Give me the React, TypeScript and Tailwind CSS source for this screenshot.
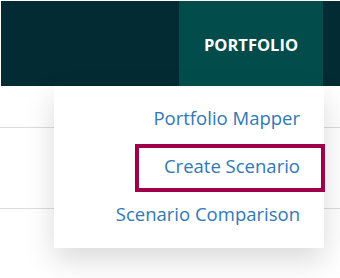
import React from "react";

export default function App() {
  const font = { fontFamily: '"Open Sans", "Noto Sans", sans-serif' };
  return (
    <div className="relative w-[340px] h-[278px] bg-white overflow-hidden" style={font}>
      <div className="pt-[1px] pl-[1px]">
        <div className="flex h-[85px] bg-[#022b33]">
          <div className="w-[178px]" />
          <div className="w-[144px] bg-[#024d4c] flex items-center justify-center pt-[4px]">
            <span className="text-white font-bold text-[16.5px]">PORTFOLIO</span>
          </div>
          <div className="flex-1" />
        </div>
      </div>
      <div className="flex flex-col">
        <div className="h-[42px] border-b border-[#dcdcdc]" />
        <div className="h-[81px] border-b border-[#dcdcdc]" />
      </div>
      <div className="absolute left-[54px] top-[86px] w-[270px] h-[162px] bg-white shadow-[0_12px_28px_rgba(0,0,0,0.15)] pt-[8px] pr-[24px]">
        <div className="flex flex-col items-end text-[#3078b8] text-[18.5px]">
          <div className="h-[48px] flex items-center">Portfolio Mapper</div>
          <div className="h-[48px] flex items-center">Create Scenario</div>
          <div className="h-[48px] flex items-center">Scenario Comparison</div>
        </div>
      </div>
      <div className="absolute left-[135px] top-[144px] w-[190px] h-[48px] border-[4px] border-[#a0004a]" />
    </div>
  );
}
